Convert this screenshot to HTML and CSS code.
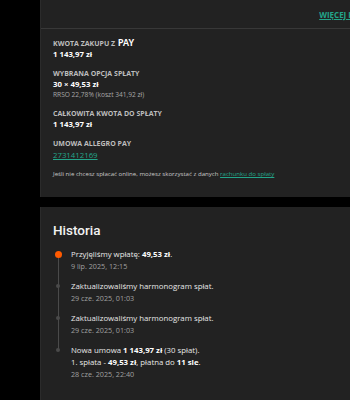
FILE: index.html
```html
<!DOCTYPE html>
<html lang="pl">
<head>
<meta charset="utf-8">
<link rel="stylesheet" href="styles.css">
</head>
<body>
<div class="page">
  <section class="panel panel-top">
    <div class="panel-head">
      <a class="more" href="#">WIĘCEJ INFORMACJI</a>
    </div>
    <div class="details">
      <div class="group">
        <div class="label">KWOTA ZAKUPU Z <span class="pay">PAY</span></div>
        <div class="value">1 143,97 zł</div>
      </div>
      <div class="group">
        <div class="label">WYBRANA OPCJA SPŁATY</div>
        <div class="value">30 × 49,53 zł</div>
        <div class="small">RRSO 22,78% (koszt 341,92 zł)</div>
      </div>
      <div class="group">
        <div class="label">CAŁKOWITA KWOTA DO SPŁATY</div>
        <div class="value">1 143,97 zł</div>
      </div>
      <div class="group">
        <div class="label">UMOWA ALLEGRO PAY</div>
        <a class="link contract" href="#">2731412169</a>
      </div>
      <p class="note">Jeśli nie chcesz spłacać online, możesz skorzystać z danych <a class="link" href="#">rachunku do spłaty</a></p>
    </div>
  </section>

  <section class="panel panel-history">
    <h2 class="title">Historia</h2>
    <ul class="timeline">
      <li class="event event-first">
        <span class="dot dot-orange"></span>
        <div class="text">Przyjęliśmy wpłatę: <b>49,53 zł</b>.</div>
        <div class="date">9 lip. 2025, 12:15</div>
      </li>
      <li class="event">
        <span class="dot"></span>
        <div class="text">Zaktualizowaliśmy harmonogram spłat.</div>
        <div class="date">29 cze. 2025, 01:03</div>
      </li>
      <li class="event">
        <span class="dot"></span>
        <div class="text">Zaktualizowaliśmy harmonogram spłat.</div>
        <div class="date">29 cze. 2025, 01:03</div>
      </li>
      <li class="event event-last">
        <span class="dot"></span>
        <div class="text">Nowa umowa <b>1 143,97 zł</b> (30 spłat).</div>
        <div class="text">1. spłata - <b>49,53 zł</b>, płatna do <b>11 sie</b>.</div>
        <div class="date">28 cze. 2025, 22:40</div>
      </li>
    </ul>
  </section>
</div>
</body>
</html>
```

FILE: styles.css
```css
html, body {
  margin: 0;
  padding: 0;
  background: #000;
  overflow: hidden;
  width: 350px;
  height: 400px;
}
body {
  font-family: "Open Sans", "Noto Sans", sans-serif;
  color: #e6e6e6;
}
.page {
  padding-left: 40px;
  display: flex;
  flex-direction: column;
  gap: 10px;
  width: 370px;
}
.panel {
  background: #222;
  border-left: 1px solid #2b2b2b;
}
.panel-head {
  height: 28px;
  border-bottom: 1px solid #383838;
  display: flex;
  align-items: center;
  justify-content: flex-end;
  padding-right: 13px;
}
.more {
  font-size: 8px;
  font-weight: 700;
  color: #23a58a;
  text-decoration: underline;
  white-space: nowrap;
}
.details {
  padding: 9px 12px 17px 12px;
  display: flex;
  flex-direction: column;
  gap: 8px;
}
.group {
  display: flex;
  flex-direction: column;
}
.label {
  font-size: 7px;
  line-height: 11px;
  font-weight: 700;
  color: #bdbdbd;
}
.pay {
  font-family: "Lato", sans-serif;
  font-weight: 900;
  font-size: 8.5px;
  letter-spacing: 0.2px;
  color: #fff;
  margin-left: 1px;
}
.value {
  font-size: 7.8px;
  line-height: 11px;
  font-weight: 700;
  color: #fff;
}
.small {
  font-size: 6.6px;
  line-height: 10px;
  color: #a8a8a8;
}
.link {
  color: #23a58a;
  text-decoration: underline;
}
.contract {
  font-size: 7.8px;
  line-height: 12px;
}
.note {
  margin: -1px 0 0 0;
  font-size: 6.1px;
  line-height: 12px;
  color: #c8c8c8;
}
.panel-history {
  padding: 14px 12px 30px 12px;
}
.title {
  margin: 0 0 9px 0;
  font-family: "Roboto", sans-serif;
  font-size: 13.5px;
  line-height: 18px;
  font-weight: 500;
  color: #f2f2f2;
}
.timeline {
  list-style: none;
  margin: 0;
  padding: 0;
  display: flex;
  flex-direction: column;
  gap: 8px;
}
.event {
  position: relative;
  padding-left: 18px;
}
.event::before {
  content: "";
  position: absolute;
  left: 4.5px;
  top: 6px;
  bottom: -14px;
  width: 1.5px;
  background: #4a4a4a;
}
.event-last::before {
  display: none;
}
.dot {
  position: absolute;
  left: 3px;
  top: 4px;
  width: 4px;
  height: 4px;
  border-radius: 50%;
  background: #4a4a4a;
}
.dot-orange {
  left: 1.5px;
  top: 2.5px;
  width: 7px;
  height: 7px;
  background: #ff5a00;
}
.text {
  font-size: 7.8px;
  line-height: 12px;
  color: #e8e8e8;
}
.text b {
  color: #fff;
  font-weight: 700;
}
.date {
  font-size: 7.2px;
  line-height: 12px;
  color: #a0a0a0;
}
```
